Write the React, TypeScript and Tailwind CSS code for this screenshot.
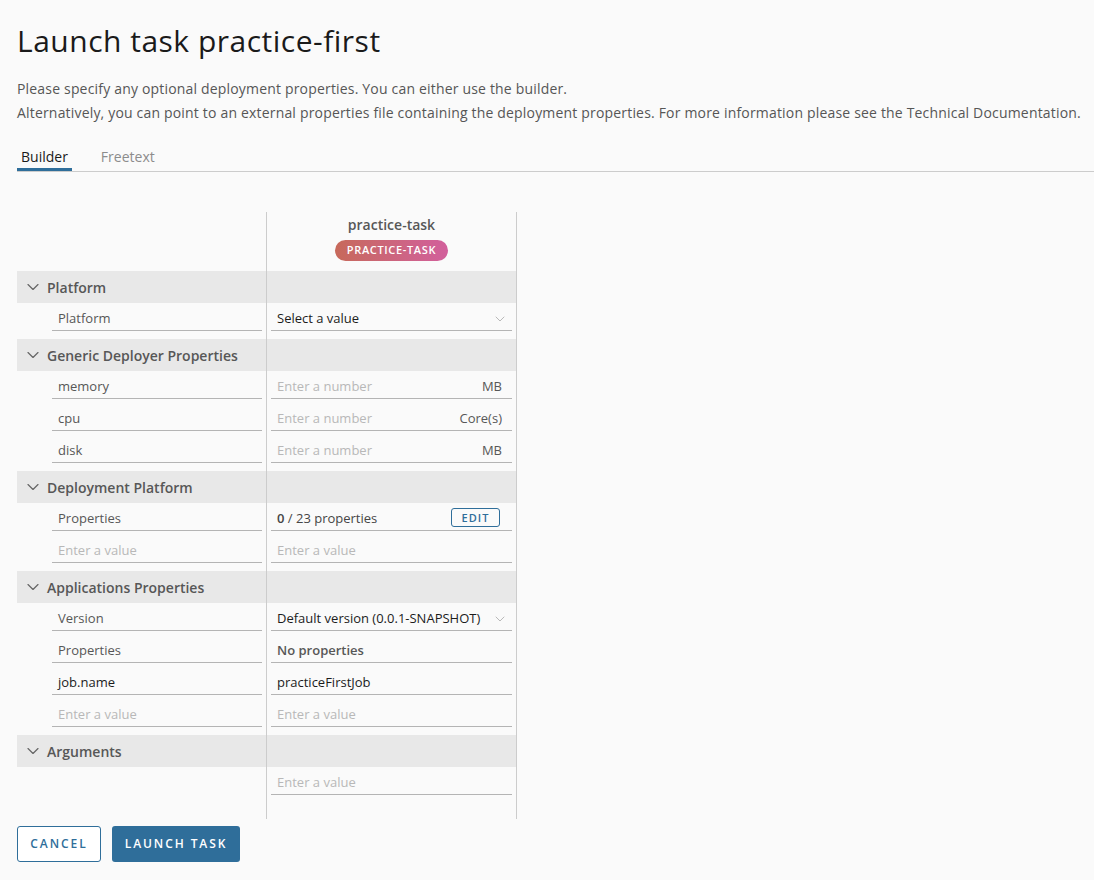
import { ChevronDown } from 'lucide-react'

type Field = {
  label?: string
  labelPlaceholder?: boolean
  value?: string
  placeholder?: string
  unit?: string
  kind?: 'input' | 'select' | 'props' | 'bold'
}

type Group = { title: string; fields: Field[] }

const groups: Group[] = [
  { title: 'Platform', fields: [{ label: 'Platform', value: 'Select a value', kind: 'select' }] },
  {
    title: 'Generic Deployer Properties',
    fields: [
      { label: 'memory', placeholder: 'Enter a number', unit: 'MB' },
      { label: 'cpu', placeholder: 'Enter a number', unit: 'Core(s)' },
      { label: 'disk', placeholder: 'Enter a number', unit: 'MB' },
    ],
  },
  {
    title: 'Deployment Platform',
    fields: [
      { label: 'Properties', kind: 'props' },
      { label: 'Enter a value', labelPlaceholder: true, placeholder: 'Enter a value' },
    ],
  },
  {
    title: 'Applications Properties',
    fields: [
      { label: 'Version', value: 'Default version (0.0.1-SNAPSHOT)', kind: 'select' },
      { label: 'Properties', value: 'No properties', kind: 'bold' },
      { label: 'job.name', value: 'practiceFirstJob' },
      { label: 'Enter a value', labelPlaceholder: true, placeholder: 'Enter a value' },
    ],
  },
]

function Row({ left, right, className = '' }: { left?: React.ReactNode; right?: React.ReactNode; className?: string }) {
  return (
    <div className={`grid w-[500px] grid-cols-[249px_251px] ${className}`}>
      <div>{left}</div>
      <div className="border-x border-[#cccccc]">{right}</div>
    </div>
  )
}

function GroupHeader({ title }: { title: string }) {
  return (
    <Row
      className="h-8 bg-[#e8e8e8]"
      left={
        <div className="flex h-8 items-center pl-[6px]">
          <ChevronDown className="h-5 w-5 text-[#666666]" strokeWidth={1.4} />
          <span className="ml-[4px] text-[14px] font-semibold text-[#575757]">{title}</span>
        </div>
      }
    />
  )
}

function Cell({ children, className = '' }: { children: React.ReactNode; className?: string }) {
  return (
    <div className={`flex h-7 items-center border-b border-[#b4b4b4] px-[6px] pt-[5px] text-[13px] ${className}`}>
      {children}
    </div>
  )
}

function FieldRow({ f }: { f: Field }) {
  let right: React.ReactNode
  if (f.kind === 'select') {
    right = (
      <Cell className="justify-between text-[#1c1c1c]">
        <span>{f.value}</span>
        <ChevronDown className="-mr-[2px] h-4 w-4 text-[#a8a8a8]" strokeWidth={1.2} />
      </Cell>
    )
  } else if (f.kind === 'props') {
    right = (
      <Cell className="justify-between text-[#454545]">
        <span>
          <b className="font-semibold text-[#454545]">0</b> / 23 properties
        </span>
        <button className="mr-[6px] -mt-[3px] h-[19px] w-[49px] rounded-[3px] border border-[#2f6e9a] text-[11px] font-semibold leading-none tracking-[0.1em] text-[#2f6e9a]">
          EDIT
        </button>
      </Cell>
    )
  } else if (f.kind === 'bold') {
    right = <Cell className="font-semibold text-[#575757]">{f.value}</Cell>
  } else if (f.placeholder) {
    right = (
      <Cell className="justify-between">
        <span className="text-[#b8b8b8]">{f.placeholder}</span>
        {f.unit && <span className="pr-[4px] text-[#575757]">{f.unit}</span>}
      </Cell>
    )
  } else {
    right = <Cell className="text-[#1c1c1c]">{f.value}</Cell>
  }

  return (
    <Row
      className="h-8"
      left={
        <div className="pl-[35px] pr-[4px]">
          <Cell className={f.labelPlaceholder ? 'text-[#b8b8b8]' : f.label === 'job.name' ? 'text-[#1c1c1c]' : 'text-[#575757]'}>
            {f.label}
          </Cell>
        </div>
      }
      right={<div className="px-[4px]">{right}</div>}
    />
  )
}

export default function App() {
  return (
    <div className="min-h-[880px] bg-[#fafafa] pl-[17px] font-['Open_Sans','Liberation_Sans',sans-serif] text-[#565656]">
      <h1 className="pt-[22px] text-[30px] leading-[38px] tracking-[0.5px] text-[#1a1a1a]">Launch task practice-first</h1>

      <div className="mt-[17px] text-[14px] leading-6 tracking-[0.18px] text-[#565656]">
        <p>Please specify any optional deployment properties. You can either use the builder.</p>
        <p>
          Alternatively, you can point to an external properties file containing the deployment properties. For more
          information please see the Technical Documentation.
        </p>
      </div>

      {/* Tabs */}
      <div className="mt-[23px] flex gap-[25px] border-b border-[#cccccc]">
        <div className="border-b-[3px] border-[#2f6e9a] px-[4px] pb-[2px] text-[14px] leading-[18px] text-[#1a1a1a]">Builder</div>
        <div className="px-[4px] pb-[2px] text-[14px] leading-[18px] text-[#8c8c8c]">Freetext</div>
      </div>

      {/* Builder table */}
      <div className="mt-[40px]">
        <Row
          className="h-[59px]"
          right={
            <div className="flex flex-col items-center pt-[4px]">
              <span className="text-[14px] font-semibold leading-[18px] text-[#575757]">practice-task</span>
              <span className="mt-[6px] flex h-[21px] items-center rounded-full bg-gradient-to-r from-[#c7695a] to-[#d25f9c] px-[12px] text-[11px] font-semibold tracking-[0.06em] text-white">
                PRACTICE-TASK
              </span>
            </div>
          }
        />
        {groups.map(g => (
          <div key={g.title}>
            <GroupHeader title={g.title} />
            {g.fields.map((f, i) => (
              <FieldRow key={i} f={f} />
            ))}
            <Row className="h-1" />
          </div>
        ))}
        <GroupHeader title="Arguments" />
        <Row
          className="h-[52px]"
          right={
            <div className="px-[4px]">
              <Cell className="text-[#b8b8b8]">Enter a value</Cell>
            </div>
          }
        />
      </div>

      {/* Actions */}
      <div className="mt-[7px] flex gap-[11px]">
        <button className="h-9 w-[84px] rounded-[3px] border border-[#2f6e9a] bg-white text-[12px] font-semibold tracking-[0.16em] text-[#2f6e9a]">
          CANCEL
        </button>
        <button className="h-9 w-[128px] rounded-[3px] bg-[#2f6e9a] text-[12px] font-semibold tracking-[0.16em] text-white">
          LAUNCH TASK
        </button>
      </div>
    </div>
  )
}
